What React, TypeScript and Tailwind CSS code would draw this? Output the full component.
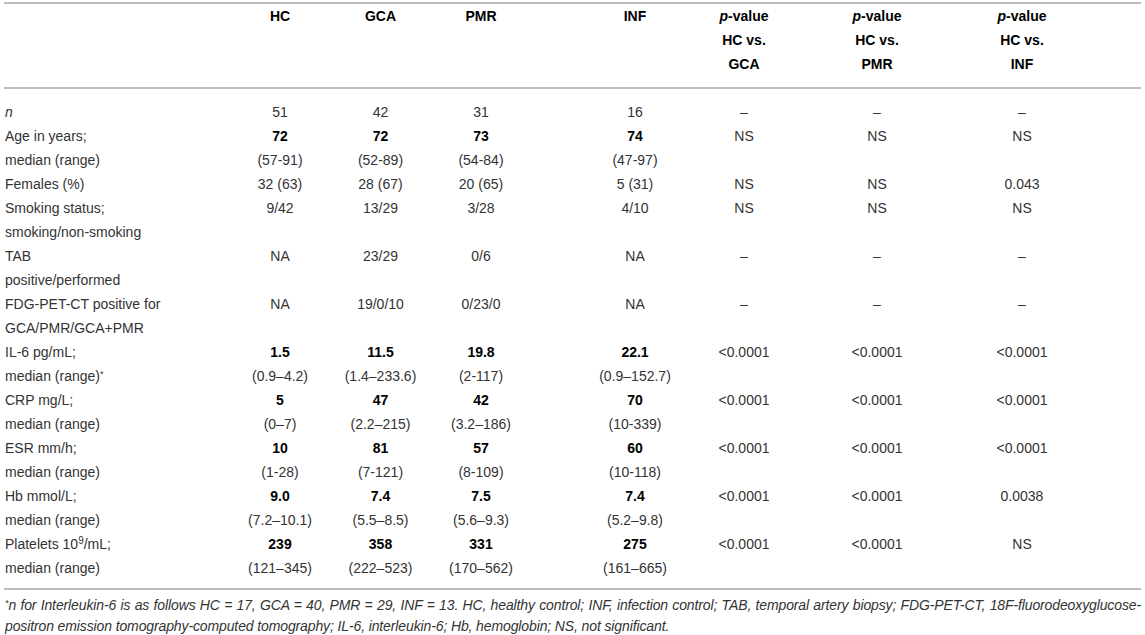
import * as React from "react";

// column classes: label, HC, GCA, PMR, INF, p(GCA), p(PMR), p(INF)
const cols = [
  "pl-[1px] text-left",
  "pr-[4px] text-center",
  "text-center",
  "pr-[27px] text-center",
  "pl-[22px] text-center",
  "pr-[12px] text-center",
  "pr-[6px] text-center",
  "pr-[47px] text-center",
];

const grid =
  "grid grid-cols-[230px_96px_101px_127px_132px_120px_140px_191px]";

interface RowProps {
  label: React.ReactNode[];
  groups: [React.ReactNode, React.ReactNode?][];
  pvals: React.ReactNode[];
  bold?: boolean;
}

function Row({ label, groups, pvals, bold }: RowProps) {
  return (
    <>
      <div className={cols[0]}>
        {label.map((l, i) => (
          <div key={i}>{l}</div>
        ))}
      </div>
      {groups.map((g, i) => (
        <div key={i} className={cols[i + 1]}>
          <div className={bold ? "font-bold text-black" : ""}>{g[0]}</div>
          {g[1] !== undefined && <div>{g[1]}</div>}
        </div>
      ))}
      {pvals.map((p, i) => (
        <div key={i} className={cols[i + 5]}>
          {p}
        </div>
      ))}
    </>
  );
}

const Rule = () => <div className="h-[2px] bg-[#bdbdbd]" />;

const dash = "–";
const lt = "<0.0001";

export default function App() {
  return (
    <div className="w-[1145px] h-[635px] bg-white overflow-hidden font-['Liberation_Sans',Arial,sans-serif] text-[14px] leading-[24px] text-[#333]">
      <div className="ml-[4px] w-[1137px]">
        <div className="mt-[2px]">
          <Rule />
        </div>

        {/* header */}
        <div className={`${grid} pb-[11px] font-bold text-black`}>
          <div className={cols[0]} />
          <div className={cols[1]}>HC</div>
          <div className={cols[2]}>GCA</div>
          <div className={cols[3]}>PMR</div>
          <div className={cols[4]}>INF</div>
          {["GCA", "PMR", "INF"].map((g, i) => (
            <div key={g} className={cols[i + 5]}>
              <div>
                <i>p</i>-value
              </div>
              <div>HC vs.</div>
              <div>{g}</div>
            </div>
          ))}
        </div>
        <Rule />

        {/* body */}
        <div className={`${grid} pt-[11px] pb-[8px]`}>
          <Row
            label={[<i>n</i>]}
            groups={[["51"], ["42"], ["31"], ["16"]]}
            pvals={[dash, dash, dash]}
          />
          <Row
            bold
            label={["Age in years;", "median (range)"]}
            groups={[
              ["72", "(57-91)"],
              ["72", "(52-89)"],
              ["73", "(54-84)"],
              ["74", "(47-97)"],
            ]}
            pvals={["NS", "NS", "NS"]}
          />
          <Row
            label={["Females (%)"]}
            groups={[["32 (63)"], ["28 (67)"], ["20 (65)"], ["5 (31)"]]}
            pvals={["NS", "NS", "0.043"]}
          />
          <Row
            label={["Smoking status;", "smoking/non-smoking"]}
            groups={[["9/42"], ["13/29"], ["3/28"], ["4/10"]]}
            pvals={["NS", "NS", "NS"]}
          />
          <Row
            label={["TAB", "positive/performed"]}
            groups={[["NA"], ["23/29"], ["0/6"], ["NA"]]}
            pvals={[dash, dash, dash]}
          />
          <Row
            label={["FDG-PET-CT positive for", "GCA/PMR/GCA+PMR"]}
            groups={[["NA"], ["19/0/10"], ["0/23/0"], ["NA"]]}
            pvals={[dash, dash, dash]}
          />
          <Row
            bold
            label={[
              "IL-6 pg/mL;",
              <>
                median (range)<sup className="text-[9px]">*</sup>
              </>,
            ]}
            groups={[
              ["1.5", "(0.9–4.2)"],
              ["11.5", "(1.4–233.6)"],
              ["19.8", "(2-117)"],
              ["22.1", "(0.9–152.7)"],
            ]}
            pvals={[lt, lt, lt]}
          />
          <Row
            bold
            label={["CRP mg/L;", "median (range)"]}
            groups={[
              ["5", "(0–7)"],
              ["47", "(2.2–215)"],
              ["42", "(3.2–186)"],
              ["70", "(10-339)"],
            ]}
            pvals={[lt, lt, lt]}
          />
          <Row
            bold
            label={["ESR mm/h;", "median (range)"]}
            groups={[
              ["10", "(1-28)"],
              ["81", "(7-121)"],
              ["57", "(8-109)"],
              ["60", "(10-118)"],
            ]}
            pvals={[lt, lt, lt]}
          />
          <Row
            bold
            label={["Hb mmol/L;", "median (range)"]}
            groups={[
              ["9.0", "(7.2–10.1)"],
              ["7.4", "(5.5–8.5)"],
              ["7.5", "(5.6–9.3)"],
              ["7.4", "(5.2–9.8)"],
            ]}
            pvals={[lt, lt, "0.0038"]}
          />
          <Row
            bold
            label={[
              <>
                Platelets 10<sup className="text-[10px]">9</sup>/mL;
              </>,
              "median (range)",
            ]}
            groups={[
              ["239", "(121–345)"],
              ["358", "(222–523)"],
              ["331", "(170–562)"],
              ["275", "(161–665)"],
            ]}
            pvals={[lt, lt, "NS"]}
          />
        </div>
        <Rule />

        {/* footnote */}
        <div className="pt-[5px] pl-[1px] text-[14px] leading-[21px] italic whitespace-nowrap tracking-[-0.12px]">
          <div className="text-justify [text-align-last:justify]">
            <sup className="text-[9px]">*</sup>n for Interleukin-6 is as follows HC = 17, GCA = 40, PMR = 29, INF = 13. HC, healthy control; INF, infection control; TAB, temporal artery biopsy; FDG-PET-CT, 18F-fluorodeoxyglucose-
          </div>
          <div>
            positron emission tomography-computed tomography; IL-6, interleukin-6; Hb, hemoglobin; NS, not significant.
          </div>
        </div>
      </div>
    </div>
  );
}
